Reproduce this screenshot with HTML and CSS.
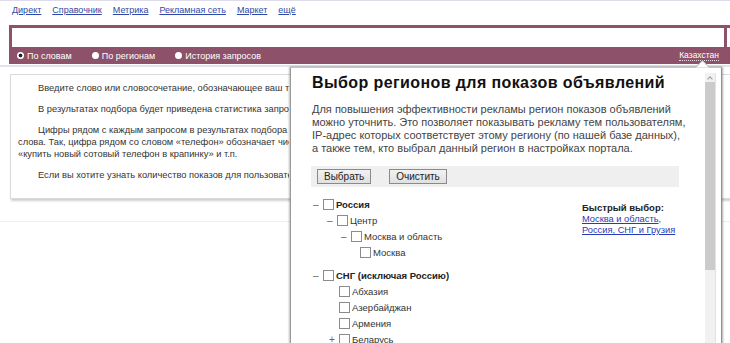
FILE: index.html
```html
<!DOCTYPE html>
<html lang="ru">
<head>
<meta charset="utf-8">
<title>Подбор слов</title>
<link rel="stylesheet" href="styles.css">
</head>
<body>
<div class="page">
  <nav class="topnav">
    <a href="#">Директ</a>
    <a href="#">Справочник</a>
    <a href="#">Метрика</a>
    <a href="#">Рекламная сеть</a>
    <a href="#">Маркет</a>
    <a href="#">ещё</a>
  </nav>
  <div class="search">
    <div class="search-row">
      <div class="search-input"></div>
      <div class="search-btn"></div>
    </div>
    <div class="modes">
      <span class="mode"><span class="radio on"></span>По словам</span>
      <span class="mode"><span class="radio"></span>По регионам</span>
      <span class="mode"><span class="radio"></span>История запросов</span>
      <span class="region">Казахстан</span>
    </div>
  </div>
  <div class="rule"></div>
  <div class="help">
    <div class="help-text">
      <p>Введите слово или словосочетание, обозначающее ваш товар или услугу, и нажмите «Подобрать».</p>
      <p>В результатах подбора будет приведена статистика запросов, включающих выбранное вами слово.</p>
      <p>Цифры рядом с каждым запросом в результатах подбора слов дают прогноз числа показов<br>слова. Так, цифра рядом со словом «телефон» обозначает число показов по всем запросам<br>«купить новый сотовый телефон в крапинку» и т.п.</p>
      <p>Если вы хотите узнать количество показов для пользователей конкретного региона, выберите регион.</p>
    </div>
  </div>
  <div class="rule2"></div>
</div>

<div class="popup">
  <span class="arrow"></span>
  <div class="pop-body">
    <h1 class="pop-title">Выбор регионов для показов объявлений</h1>
    <p class="pop-text">Для повышения эффективности рекламы регион показов объявлений<br>можно уточнить. Это позволяет показывать рекламу тем пользователям,<br>IP-адрес которых соответствует этому региону (по нашей базе данных),<br>а также тем, кто выбрал данный регион в настройках портала.</p>
    <div class="toolbar">
      <button class="btn" type="button">Выбрать</button>
      <button class="btn" type="button">Очистить</button>
    </div>
    <div class="regions">
      <div class="tree">
        <div class="node lv0 bold"><span class="tg">–</span><span class="cb"></span>Россия</div>
        <div class="node lv1"><span class="tg">–</span><span class="cb"></span>Центр</div>
        <div class="node lv2"><span class="tg">–</span><span class="cb"></span>Москва и область</div>
        <div class="node lv3"><span class="tg"></span><span class="cb"></span>Москва</div>
        <div class="node lv0 bold group"><span class="tg">–</span><span class="cb"></span>СНГ (исключая Россию)</div>
        <div class="node lv1b"><span class="tg"></span><span class="cb"></span>Абхазия</div>
        <div class="node lv1b"><span class="tg"></span><span class="cb"></span>Азербайджан</div>
        <div class="node lv1b"><span class="tg"></span><span class="cb"></span>Армения</div>
        <div class="node lv1b"><span class="tg">+</span><span class="cb"></span>Беларусь</div>
      </div>
      <div class="quick">
        <div class="quick-title">Быстрый выбор:</div>
        <a href="#" class="quick-link">Москва и область</a>,<br>
        <a href="#" class="quick-link">Россия, СНГ и Грузия</a>
      </div>
    </div>
  </div>
  <div class="scroll">
    <div class="scroll-up"></div>
    <div class="scroll-thumb"></div>
  </div>
</div>
</body>
</html>
```

FILE: styles.css
```css
html, body {
  margin: 0;
  padding: 0;
}
body {
  width: 730px;
  height: 343px;
  overflow: hidden;
  position: relative;
  background: #fff;
  font-family: "Liberation Sans", Arial, sans-serif;
  color: #333;
}
.page {
  width: 730px;
}
.topnav {
  border-top: 1px solid #dddbea;
  height: 21px;
  box-sizing: border-box;
  display: flex;
  align-items: flex-start;
  gap: 11px;
  padding: 4px 0 0 12px;
  font-size: 9px;
  line-height: 11px;
}
.topnav a {
  color: #2f48a8;
  text-decoration: underline;
}
.search {
  margin-top: 4px;
  margin-left: 9px;
  height: 39px;
  background: #8d5169;
  padding-top: 3px;
  box-sizing: border-box;
}
.search-row {
  display: flex;
  height: 19px;
  padding-left: 3px;
}
.search-input {
  width: 712px;
  background: #fff;
  margin-right: 3px;
}
.search-btn {
  flex: 1;
  background: #fff;
}
.modes {
  display: flex;
  align-items: center;
  height: 17px;
  padding-left: 8px;
  font-size: 9px;
  color: #fff;
}
.mode {
  display: flex;
  align-items: center;
  margin-right: 20px;
}
.radio {
  width: 7px;
  height: 7px;
  border-radius: 50%;
  background: #fff;
  margin-right: 3px;
}
.radio.on {
  background: radial-gradient(circle, #222 0 1.6px, #fff 2.2px);
}
.region {
  margin-left: auto;
  margin-right: 11px;
  font-size: 8.5px;
  border-bottom: 1px dotted #e8d8e0;
  line-height: 10px;
}
.rule {
  height: 2px;
  margin-top: 1px;
  background: #e6e2ec;
}
.help {
  margin-top: 7px;
  margin-left: 10px;
  width: 780px;
  border: 1px solid #dadada;
  box-shadow: 1px 2px 2px #cfcfcf;
  padding: 7px 0 17px 7px;
  font-size: 9.3px;
  line-height: 12px;
  color: #333;
  white-space: nowrap;
}
.help-text {
  width: 271px;
  overflow: hidden;
}
.help p {
  margin: 0 0 9px;
  text-indent: 20px;
}
.help p:last-child {
  margin-bottom: 0;
}
.rule2 {
  margin-top: 22px;
  height: 1px;
  background: #efeff3;
}

/* popup */
.popup {
  position: absolute;
  left: 290px;
  top: 67px;
  width: 432px;
  height: 290px;
  background: #fff;
  border: 1px solid #c4c4c4;
  border-left-color: #9a9a9a;
  border-right-color: #8f8f8f;
  box-shadow: -1px 0 2px rgba(0,0,0,0.25), 1px 0 2px rgba(0,0,0,0.3);
  display: flex;
  box-sizing: border-box;
}
.arrow {
  position: absolute;
  top: -6px;
  left: 406px;
  width: 10px;
  height: 10px;
  background: #fff;
  border-left: 1px solid #b0b0b0;
  border-top: 1px solid #b0b0b0;
  transform: rotate(45deg);
  clip-path: polygon(0 0, 100% 0, 0 100%);
}
.pop-body {
  flex: 1;
  padding: 4px 0 0 20px;
  color: #444;
}
.pop-title {
  margin: 0 0 0 1px;
  font-size: 16px;
  letter-spacing: 0.4px;
  line-height: 22px;
  font-weight: bold;
  color: #111;
}
.pop-text {
  margin: 9px 0 0 1px;
  font-size: 11px;
  line-height: 13px;
  color: #444;
  white-space: nowrap;
}
.toolbar {
  margin-top: 11px;
  width: 368px;
  height: 21px;
  background: #efefef;
  box-sizing: border-box;
  padding: 3px 0 0 6px;
  display: flex;
  align-items: flex-start;
  gap: 18px;
}
.btn {
  height: 15px;
  padding: 0 6px;
  border: 1px solid #8a8a8a;
  background: linear-gradient(#f2f2f2, #e0e0e0);
  font-family: "Liberation Sans", Arial, sans-serif;
  font-size: 10px;
  line-height: 13px;
  color: #222;
  border-radius: 0;
}
.regions {
  display: flex;
  margin-top: 9px;
  margin-left: 2px;
}
.tree {
  width: 269px;
  font-size: 9.5px;
  color: #333;
}
.node {
  display: flex;
  align-items: center;
  height: 16px;
}
.node.bold {
  font-weight: bold;
  color: #222;
}
.node.group {
  margin-top: 7px;
}
.lv0 { padding-left: 0; }
.lv1 { padding-left: 14px; }
.lv1b { padding-left: 16px; }
.lv2 { padding-left: 28px; }
.lv3 { padding-left: 37px; }
.tg {
  width: 10px;
  flex: none;
  color: #666;
  font-weight: normal;
  font-size: 10px;
}
.cb {
  width: 9px;
  height: 9px;
  border: 1px solid #8c8c8c;
  background: #fff;
  margin-right: 2px;
  flex: none;
}
.quick {
  padding-top: 6px;
  font-size: 9.3px;
  line-height: 11px;
  color: #2a3ab8;
}
.quick-title {
  font-weight: bold;
  font-size: 9.5px;
  line-height: 12px;
  color: #222;
}
.quick-link {
  color: #2a3ab8;
  text-decoration: underline;
}
.scroll {
  width: 11px;
  margin: 5px 5px 0 0;
  background: #f1f1f1;
  border-right: 1px solid #e2e2e2;
  box-sizing: border-box;
}
.scroll-up {
  height: 9px;
  position: relative;
}
.scroll-up::after {
  content: "";
  position: absolute;
  left: 3px;
  top: 4px;
  width: 3px;
  height: 3px;
  border-left: 1px solid #9a9a9a;
  border-top: 1px solid #9a9a9a;
  transform: rotate(45deg);
}
.scroll-thumb {
  height: 188px;
  background: #cbcbcb;
}
```
